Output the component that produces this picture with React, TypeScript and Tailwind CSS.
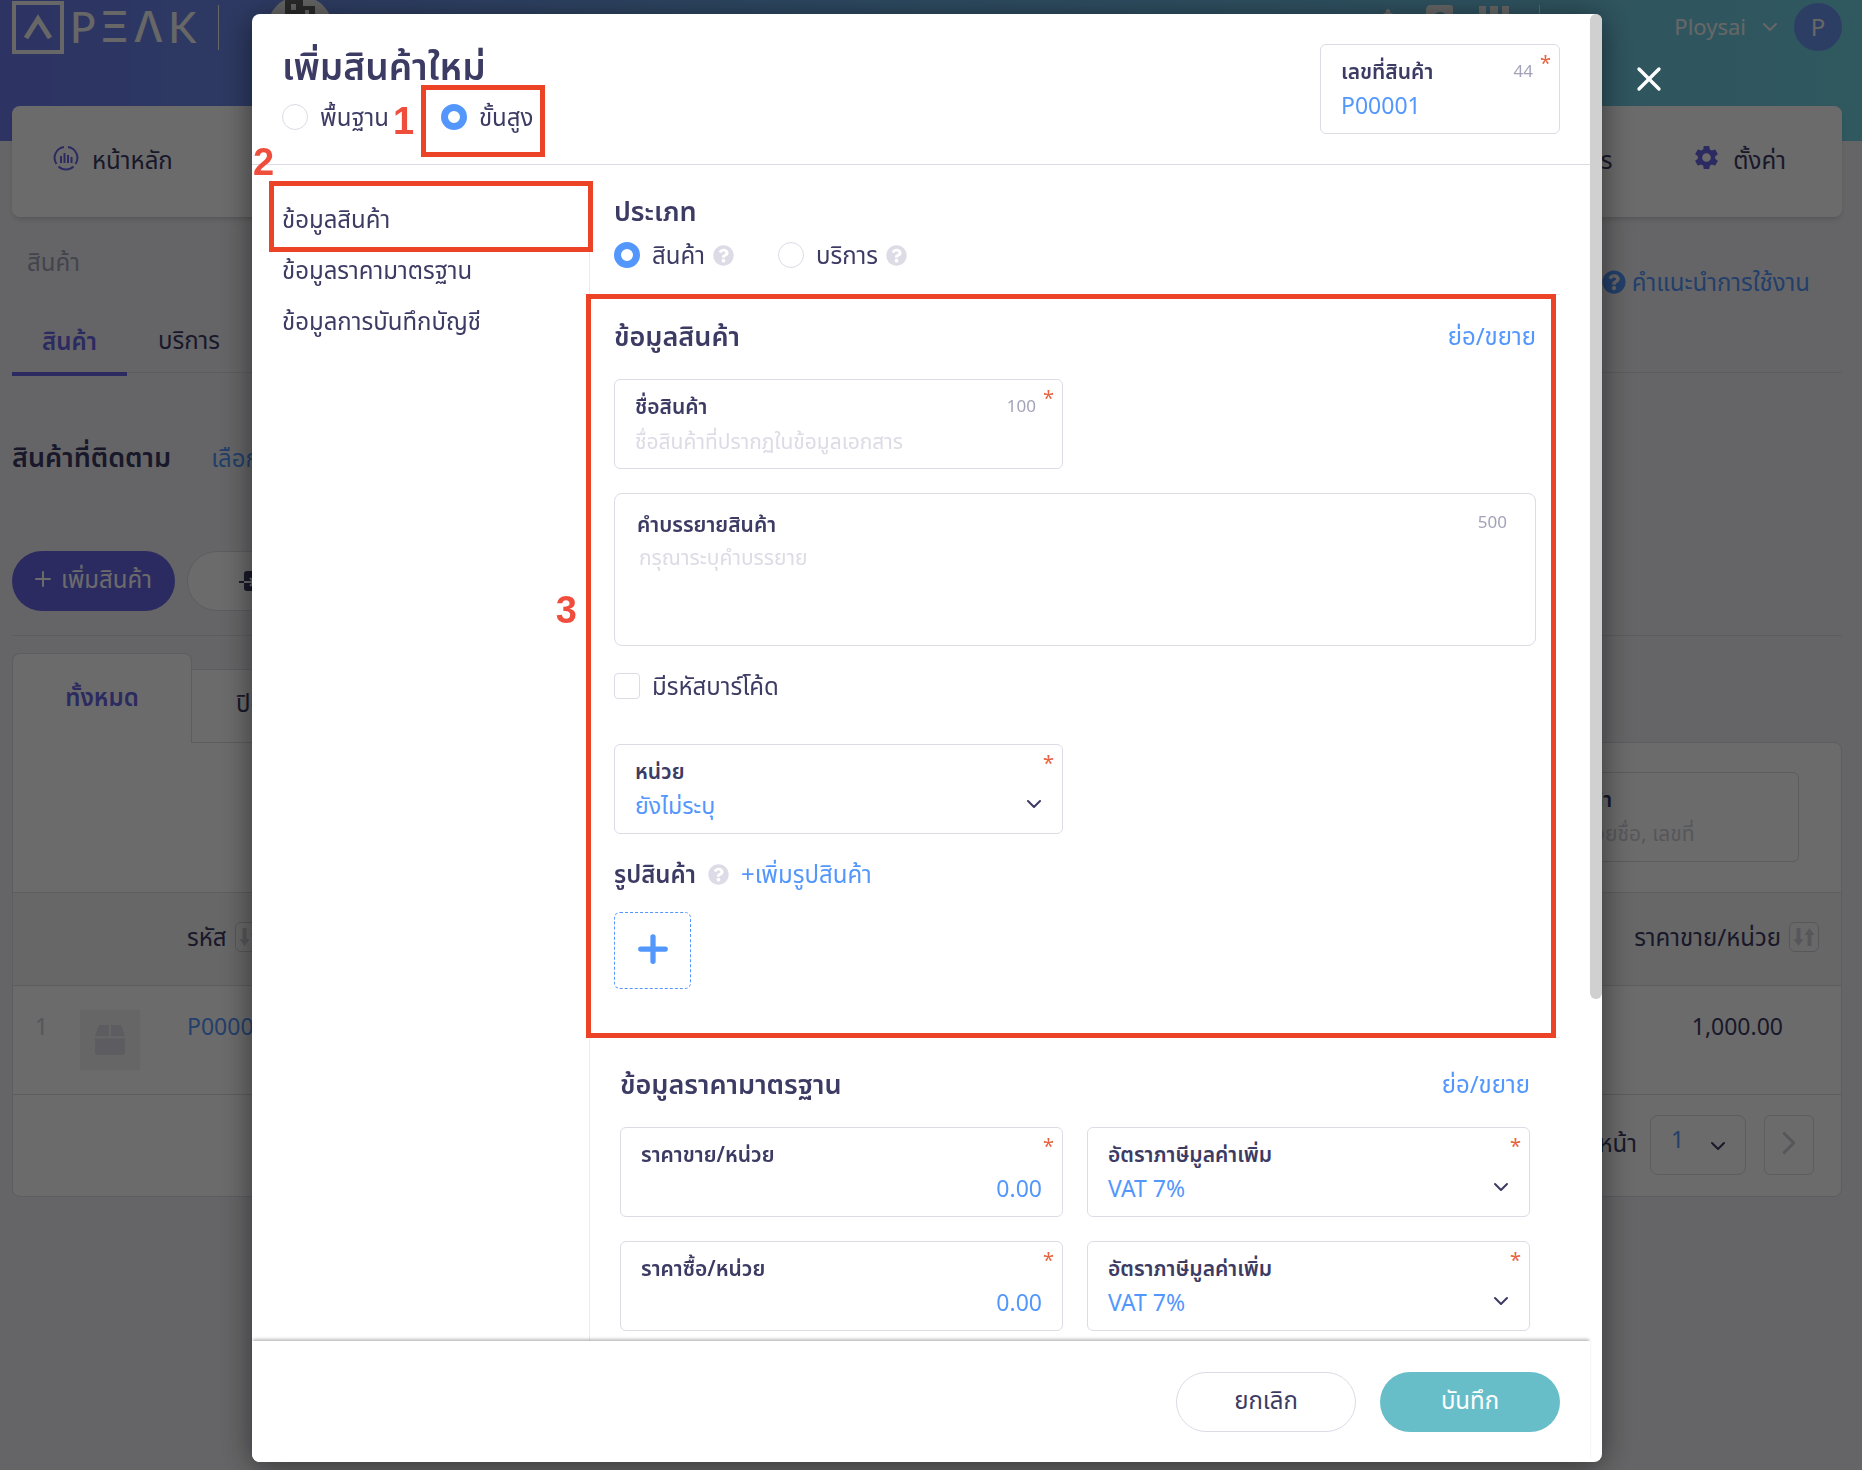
import React, { useId, useState } from 'react';
import { ChevronDown, ChevronRight, Plus, X } from 'lucide-react';
import { FaBell, FaBox, FaQuestionCircle } from 'react-icons/fa';
import { MdSettings } from 'react-icons/md';

/* ---------- small shared pieces ---------- */

function Help() {
  return <FaQuestionCircle size={21} className="shrink-0 text-[#dcdbe6]" />;
}

function Required() {
  return <span className="absolute top-1.5 right-2 text-xl leading-6 text-[#e8633f]">*</span>;
}

function Callout({ className }: { className: string }) {
  return <div className={`pointer-events-none absolute z-10 border-5 border-[#ec4226] ${className}`} />;
}

function CalloutNumber({ n, className }: { n: number; className: string }) {
  return (
    <span
      className={`pointer-events-none absolute z-10 font-['Liberation_Sans',sans-serif] text-[38px] leading-10 font-bold text-[#f04e3c] ${className}`}
    >
      {n}
    </span>
  );
}

interface RadioProps {
  name: string;
  label: string;
  checked: boolean;
  onChange: () => void;
}

function Radio({ name, label, checked, onChange }: RadioProps) {
  return (
    <label className="flex items-center gap-3 text-2xl leading-8">
      <input
        type="radio"
        name={name}
        checked={checked}
        onChange={onChange}
        className="size-[26px] shrink-0 appearance-none rounded-full border border-[#dcdbe6] bg-white checked:border-7 checked:border-[#5397fc]"
      />
      {label}
    </label>
  );
}

interface FieldProps {
  label: string;
  limit?: number;
  placeholder?: string;
  value?: string;
  required?: boolean;
  alignRight?: boolean;
}

function TextField({ label, limit, placeholder, value, required, alignRight }: FieldProps) {
  const id = useId();
  return (
    <div className="relative h-[90px] rounded-md border border-[#dcdbe6] bg-white px-5 pt-2.5">
      <div className="flex items-center justify-between pr-1.5">
        <label htmlFor={id} className="text-[21px] leading-8 font-semibold">{label}</label>
        {limit !== undefined && <span className="text-[17px] leading-8 text-[#a3a2b8]">{limit}</span>}
      </div>
      <input
        id={id}
        defaultValue={value}
        placeholder={placeholder}
        className={`block h-9 w-full bg-transparent text-[23px] text-[#5397fc] outline-none placeholder:text-[21px] placeholder:text-[#dcdbe6] ${alignRight ? 'text-right' : ''}`}
      />
      {required && <Required />}
    </div>
  );
}

function SelectField({ label, value }: { label: string; value: string }) {
  const id = useId();
  return (
    <div className="relative h-[90px] rounded-md border border-[#dcdbe6] bg-white px-5 pt-2.5">
      <label htmlFor={id} className="block text-[21px] leading-8 font-semibold">{label}</label>
      <select id={id} className="block h-9 w-full appearance-none bg-transparent text-[23px] text-[#5397fc] outline-none">
        <option>{value}</option>
      </select>
      <ChevronDown size={24} className="pointer-events-none absolute right-4 bottom-[17px]" />
      <Required />
    </div>
  );
}

function SectionHeading({ title }: { title: string }) {
  return (
    <div className="flex items-center justify-between">
      <h2 className="text-[27px] leading-9 font-semibold">{title}</h2>
      <button type="button" className="text-2xl leading-9 text-[#5397fc]">ย่อ/ขยาย</button>
    </div>
  );
}

/* ---------- page behind the dialog ---------- */

function Logo() {
  return (
    <a href="#home" className="flex items-center text-[#f5f5f5]">
      <svg width="52" height="54" viewBox="0 0 52 54" fill="none" stroke="currentColor">
        <rect x="2" y="3" width="48" height="49" strokeWidth="4" />
        <path d="M14 38 26 19l12 19" strokeWidth="5" />
      </svg>
      <span className="flex items-center gap-[5px] pl-1.5 font-['Lato',sans-serif] text-[42px] leading-[54px] font-medium">
        <span>P</span>
        <span className="font-['Inter',sans-serif]">Ξ</span>
        <span className="font-['Inter',sans-serif]">Λ</span>
        <span>K</span>
      </span>
    </a>
  );
}

function SortButton() {
  return (
    <button
      type="button"
      aria-label="sort"
      className="flex size-[30px] shrink-0 items-center justify-center rounded-md border border-[#cfced8] bg-[#f8f8f8] text-[#cfced6]"
    >
      <svg width="22" height="20" viewBox="0 0 22 20" fill="currentColor">
        <path d="M3.500 1h4v11h3L5.500 19 .5 12h3zM14.500 19h4V8h3l-5-7-5 7h3z" />
      </svg>
    </button>
  );
}

function TopBar() {
  return (
    <header className="h-[141px] bg-linear-to-r from-[#6d7aec] via-[#6caee7] via-45% to-[#72d2e2]">
      <div className="flex h-[54px] items-center justify-between pr-5 pl-3 text-[#f5f5f5]">
        <div className="flex items-center">
          <Logo />
          <span className="ml-[22px] h-[45px] w-px bg-[#f5f5f5]" />
          <span className="mt-1 ml-12 flex size-[66px] items-start justify-center rounded-full bg-[#f0f0f0] text-[#636363]">
            <svg width="32" height="40" viewBox="0 0 32 40" fill="currentColor">
              <path d="M1 0h18v10h12v30H1zm6 8v6h5V8zm0 10v5h5v-5zm14-4v6h4v-6z" fillRule="evenodd" />
            </svg>
          </span>
        </div>
        <div className="flex items-center">
          <FaBell size={36} />
          <svg width="27" height="44" viewBox="0 0 27 44" className="ml-5" fill="currentColor">
            <path d="M5 0h19q3 0 3 3v41H0V5q0-5 5-5z" />
            <path d="M9 13a5 5 0 1 1 7 5l-2 4" fill="none" stroke="#6dbfe0" strokeWidth="3" />
          </svg>
          <svg width="30" height="42" viewBox="0 0 30 42" className="ml-[26px]" fill="currentColor">
            <path d="M0 0h7v9H0zM11 0h8v9h-8zM23 0h7v9h-7zM0 16h7v9H0zM11 16h8v9h-8zM23 16h7v9h-7z" />
          </svg>
          <span className="ml-[30px] h-[45px] w-px bg-[#f5f5f5]" />
          <button type="button" className="ml-[134px] flex items-center gap-3 text-[22px]">
            <span className="pb-0.5">Ploysai</span>
            <ChevronDown size={24} />
            <span className="flex size-12 items-center justify-center rounded-full bg-[#6d94f0] text-2xl">P</span>
          </button>
        </div>
      </div>
    </header>
  );
}

function NavCard() {
  return (
    <nav className="-mt-[35px] mr-5 ml-3 flex h-[111px] items-center justify-between rounded-lg bg-white px-10 pb-1 text-2xl shadow-md">
      <a href="#main" className="flex items-center gap-3">
        <svg width="28" height="28" viewBox="0 0 28 28" className="mb-1" fill="none" stroke="#6966e6" strokeWidth="2">
          <path d="M16 3a11 11 0 0 1 7.500 17M12 3a11 11 0 0 0-7.500 17M6.500 22.500a11 11 0 0 0 15 0" />
          <path d="M9 12v7M12.500 9v10M16 11v8M19.500 13v6" />
        </svg>
        หน้าหลัก
      </a>
      <div className="flex items-center gap-20 pr-4">
        <a href="#docs">เอกสาร</a>
        <a href="#settings" className="flex items-center gap-3">
          <MdSettings size={29} className="mb-1 text-[#6966e6]" />
          ตั้งค่า
        </a>
      </div>
    </nav>
  );
}

function ProductTable() {
  return (
    <section className="rounded-lg rounded-tl-none border border-[#dcdbe6] bg-white">
      <div className="flex justify-end px-[42px] pt-[29px] pb-[30px]">
        <div className="h-[90px] w-[304px] rounded-md border border-[#dcdbe6] px-5 pt-2.5">
          <label htmlFor="search" className="block text-[21px] leading-8 font-semibold">ค้นหาสินค้า</label>
          <input
            id="search"
            placeholder="ค้นหาได้ด้วยชื่อ, เลขที่"
            className="block h-9 w-full bg-transparent text-[21px] outline-none placeholder:text-[#cfced8]"
          />
        </div>
      </div>
      <table className="w-full text-2xl">
        <thead>
          <tr className="h-[93px] border-y border-[#dcdbe6] bg-[#f5f5f5]">
            <th className="w-[67px]" />
            <th className="w-[107px]" />
            <th className="pb-1 text-left font-normal">
              <span className="flex items-center gap-2">รหัส <SortButton /></span>
            </th>
            <th className="pr-[22px] pb-1 font-normal">
              <span className="flex items-center justify-end gap-2">ราคาขาย/หน่วย <SortButton /></span>
            </th>
          </tr>
        </thead>
        <tbody>
          <tr className="h-[109px] border-b border-[#dcdbe6] align-top text-[23px]">
            <td className="pt-[22px] pl-[22px] leading-9 text-[#cfced8]">1</td>
            <td className="pt-6">
              <span className="flex size-[60px] items-center justify-center bg-[#f4f4f4]">
                <FaBox size={30} className="text-[#dcdbe6]" />
              </span>
            </td>
            <td className="pt-[22px] leading-9"><a href="#p" className="text-[#5397fc]">P00001</a></td>
            <td className="pt-[22px] pr-[58px] text-right leading-9">1,000.00</td>
          </tr>
        </tbody>
      </table>
      <div className="flex h-[101px] items-center justify-end gap-[13px] pr-[27px] pb-0.5 text-2xl">
        <label htmlFor="page" className="pb-1">หน้า</label>
        <div className="relative">
          <select
            id="page"
            className="block h-[60px] w-24 appearance-none rounded-lg border border-[#dcdbe6] bg-transparent pb-2.5 pl-5 text-[23px] text-[#5397fc]"
          >
            <option>1</option>
          </select>
          <ChevronDown size={24} className="pointer-events-none absolute right-4 bottom-[17px]" />
        </div>
        <button
          type="button"
          aria-label="next"
          className="ml-[5px] flex h-[60px] w-[50px] items-center justify-center rounded-md border border-[#dcdbe6] pb-1 text-[#cfced8]"
        >
          <ChevronRight size={38} strokeWidth={2} />
        </button>
      </div>
    </section>
  );
}

function ProductsPage() {
  return (
    <div className="min-h-screen bg-[#f1f1f5]">
      <TopBar />
      <NavCard />
      <main className="pr-5 pl-3">
        <div className="flex h-[100px] items-center justify-between pr-8 pl-[15px] text-2xl">
          <span className="pb-2.5 text-[#a3a2b8]">สินค้า</span>
          <a href="#guide" className="flex items-center gap-1.5 pt-[30px] text-[#5397fc]">
            <FaQuestionCircle size={24} />
            คำแนะนำการใช้งาน
          </a>
        </div>
        <div className="flex h-[56px] items-start border-b border-[#dcdbe6] text-2xl leading-12">
          <button type="button" className="h-[59px] w-[115px] border-b-4 border-[#6966e6] pb-[9px] font-semibold text-[#6966e6]">
            สินค้า
          </button>
          <button type="button" className="-mt-px w-[124px]">บริการ</button>
        </div>
        <div className="flex items-center gap-10 pt-[65px]">
          <h1 className="pb-0.5 text-[27px] leading-[38px] font-semibold">สินค้าที่ติดตาม</h1>
          <button type="button" className="text-2xl text-[#5397fc]">เลือกสินค้า</button>
        </div>
        <div className="flex gap-3 border-b border-[#dcdbe6] pt-[73px] pb-6 text-2xl">
          <button type="button" className="flex h-[60px] w-[163px] items-center justify-center gap-1.5 rounded-full bg-[#6966e6] pr-1 pb-1 text-white">
            <Plus size={24} />
            เพิ่มสินค้า
          </button>
          <button type="button" className="flex h-[60px] w-60 items-center gap-2 rounded-full border border-[#dcdbe6] bg-white pl-[51px]">
            <svg width="26" height="22" viewBox="0 0 26 22" fill="none">
              <rect x="5" y="1" width="18" height="20" rx="3" fill="#3c3b64" />
              <path d="M0 12h5" stroke="#3c3b64" strokeWidth="2" />
              <path d="M5 12h10M11 8l4 4-4 4" stroke="#fff" strokeWidth="2" />
            </svg>
            นำเข้า
          </button>
        </div>
        <div className="flex items-end pt-[17px] text-2xl">
          <button type="button" className="relative -mb-px h-[90px] w-[180px] rounded-t-lg border border-b-0 border-[#dcdbe6] bg-white pb-1 font-semibold text-[#6966e6]">
            ทั้งหมด
          </button>
          <button type="button" className="h-[73px] w-[180px] border-t border-r border-[#dcdbe6] bg-white pb-1.5 pl-11 text-left">
            ปิดใช้งาน
          </button>
        </div>
        <ProductTable />
      </main>
    </div>
  );
}

/* ---------- add product dialog ---------- */

const SECTIONS = ['ข้อมูลสินค้า', 'ข้อมูลราคามาตรฐาน', 'ข้อมูลการบันทึกบัญชี'];

function AddProductDialog() {
  const [mode, setMode] = useState('advanced');
  const [kind, setKind] = useState('product');

  return (
    <div className="fixed inset-0 flex justify-center bg-black/58 pt-3.5 pr-2 pb-2">
      <div role="dialog" aria-modal="true" className="relative flex w-[1350px] flex-col rounded-lg bg-white shadow-[0_4px_32px_rgba(0,0,0,0.5)]">
        {/* Header */}
        <div className="mr-3 flex h-[151px] shrink-0 items-start justify-between border-b border-[#dcdbe6] pr-[30px] pl-[30px]">
          <div className="pt-7">
            <h1 className="text-[37px] leading-12 font-semibold">เพิ่มสินค้าใหม่</h1>
            <div className="flex h-[54px] items-center gap-[52px]">
              <div className="relative">
                <Radio name="mode" label="พื้นฐาน" checked={mode === 'basic'} onChange={() => setMode('basic')} />
                <CalloutNumber n={1} className="top-0 left-full ml-1" />
              </div>
              <div className="relative">
                <Radio name="mode" label="ขั้นสูง" checked={mode === 'advanced'} onChange={() => setMode('advanced')} />
                <Callout className="-top-4 -right-3 -bottom-6 -left-5" />
              </div>
            </div>
          </div>
          <div className="mt-[30px] w-60">
            <TextField label="เลขที่สินค้า" limit={44} value="P00001" required />
          </div>
        </div>

        {/* Body */}
        <div className="flex min-h-0 flex-1">
          <aside className="relative w-[337px] shrink-0">
            <CalloutNumber n={2} className="-top-[23px] left-px" />
            <Callout className="top-4 -right-1 left-[17px] h-[71px]" />
            <ul className="pt-7 pl-[30px] text-2xl leading-[51px]">
              {SECTIONS.map((s) => (
                <li key={s}><a href={`#${s}`}>{s}</a></li>
              ))}
            </ul>
            <CalloutNumber n={3} className="top-[425px] right-3" />
          </aside>

          <div className="mt-[18px] mr-[42px] flex-1 border-l border-[#ecebf1]">
            <section className="border-b border-[#ecebf1] pt-2.5 pb-[23px] pl-6">
              <h2 className="text-[27px] leading-9 font-semibold">ประเภท</h2>
              <div className="mt-2.5 flex items-center gap-11">
                <div className="flex items-center gap-2">
                  <Radio name="kind" label="สินค้า" checked={kind === 'product'} onChange={() => setKind('product')} />
                  <Help />
                </div>
                <div className="flex items-center gap-2">
                  <Radio name="kind" label="บริการ" checked={kind === 'service'} onChange={() => setKind('service')} />
                  <Help />
                </div>
              </div>
            </section>

            <section className="relative border-b border-[#ecebf1] pt-[23px] pr-6 pb-12 pl-6">
              <Callout className="-top-px right-1 -bottom-px -left-1" />
              <SectionHeading title="ข้อมูลสินค้า" />
              <div className="mt-[25px] grid grid-cols-2 gap-6">
                <TextField label="ชื่อสินค้า" limit={100} placeholder="ชื่อสินค้าที่ปรากฏในข้อมูลเอกสาร" required />
                <div className="col-span-2 rounded-lg border border-[#dcdbe6] px-[22px] pt-3">
                  <div className="flex items-center justify-between pr-1.5">
                    <label htmlFor="desc" className="text-[21px] leading-9 font-semibold">คำบรรยายสินค้า</label>
                    <span className="pb-1 text-[17px] leading-8 text-[#a3a2b8]">500</span>
                  </div>
                  <textarea
                    id="desc"
                    placeholder="กรุณาระบุคำบรรยาย"
                    className="block h-[103px] w-full resize-none bg-transparent px-0.5 text-[21px] leading-[30px] outline-none placeholder:text-[#dcdbe6]"
                  />
                </div>
              </div>
              <label className="mt-[22px] flex h-[36px] items-center gap-3 text-2xl">
                <input type="checkbox" className="size-[26px] appearance-none rounded-sm border border-[#dcdbe6] checked:bg-[#5397fc]" />
                มีรหัสบาร์โค้ด
              </label>
              <div className="mt-10 grid grid-cols-2 gap-6">
                <SelectField label="หน่วย" value="ยังไม่ระบุ" />
              </div>
              <div className="mt-[22px] flex h-9 items-center gap-3 text-2xl">
                <h3 className="font-semibold">รูปสินค้า</h3>
                <Help />
                <button type="button" className="text-[#5397fc]">+เพิ่มรูปสินค้า</button>
              </div>
              <button
                type="button"
                aria-label="add image"
                className="mt-5 flex size-[77px] items-center justify-center rounded-md border border-dashed border-[#5397fc] pb-1 text-[#5397fc]"
              >
                <Plus size={42} strokeWidth={3} />
              </button>
            </section>

            <section className="pt-7 pr-[30px] pl-[30px]">
              <SectionHeading title="ข้อมูลราคามาตรฐาน" />
              <div className="mt-[25px] grid grid-cols-2 gap-6">
                <TextField label="ราคาขาย/หน่วย" value="0.00" required alignRight />
                <SelectField label="อัตราภาษีมูลค่าเพิ่ม" value="VAT 7%" />
                <TextField label="ราคาซื้อ/หน่วย" value="0.00" required alignRight />
                <SelectField label="อัตราภาษีมูลค่าเพิ่ม" value="VAT 7%" />
              </div>
            </section>
          </div>
        </div>

        {/* Footer */}
        <div className="relative mr-3 flex h-[121px] shrink-0 items-start justify-end gap-6 rounded-bl-lg bg-white pt-[31px] pr-[30px] text-2xl shadow-[0_-3px_3px_-1px_rgba(0,0,0,0.25)]">
          <button type="button" className="h-[60px] w-[180px] rounded-full border border-[#dcdbe6] bg-white pb-1">ยกเลิก</button>
          <button type="button" className="h-[60px] w-[180px] rounded-full bg-[#67bec9] pb-1 text-white">บันทึก</button>
        </div>

        {/* Scroll thumb */}
        <div className="absolute top-0 right-0 h-[68%] w-3 rounded-full bg-[#d0d0d0]" />

        <button type="button" aria-label="close" className="absolute top-[45px] left-full ml-[27px] text-white">
          <X size={40} strokeWidth={2} />
        </button>
      </div>
    </div>
  );
}

export default function App() {
  return (
    <div className="font-['Noto_Sans','Noto_Sans_Thai',sans-serif] text-[#3c3b64]">
      <ProductsPage />
      <AddProductDialog />
    </div>
  );
}
